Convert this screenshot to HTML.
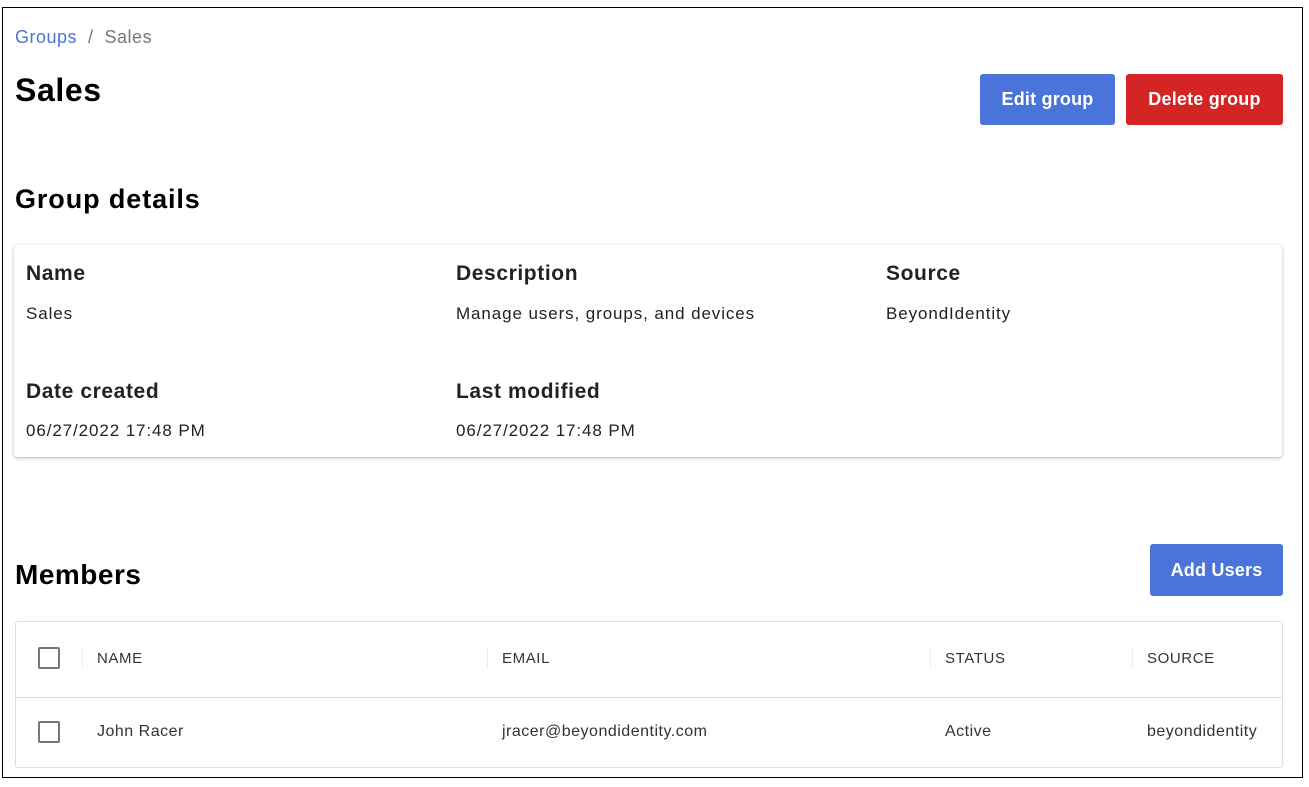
<!DOCTYPE html>
<html><head><style>
*{margin:0;padding:0;box-sizing:border-box}
body{width:1309px;height:787px;background:#fff;font-family:"Liberation Sans",sans-serif;position:relative;overflow:hidden;color:#151515}
.frame{position:absolute;left:2px;top:7px;width:1301px;height:771px;border:1px solid #000}
.a{position:absolute;white-space:nowrap}
.btn{position:absolute;color:#fff;font-size:18px;font-weight:bold;display:flex;align-items:center;justify-content:center;border-radius:3px;letter-spacing:.2px}
.card{position:absolute;left:14px;top:245px;width:1268px;height:212px;background:#fff;box-shadow:0 1px 3px rgba(0,0,0,.3);border-radius:3px}
.lbl{font-size:21px;font-weight:bold;color:#222;letter-spacing:.6px}
.val{font-size:17px;color:#222;letter-spacing:.9px}
.tbl{position:absolute;left:15px;top:621px;width:1268px;height:147px;border:1px solid #ddd;border-radius:3px}
.cb{position:absolute;width:22px;height:22px;border:2px solid #777;border-radius:2px}
.th{font-size:15px;color:#333;letter-spacing:.6px}
.td{font-size:16px;color:#333;letter-spacing:.5px}
.sep{position:absolute;width:1px;height:20px;background:#eee;top:648px}
</style></head><body>
<div class="frame"></div>
<div class="a" style="left:15px;top:27px;font-size:18px;letter-spacing:.5px"><span style="color:#4a74d9">Groups</span><span style="color:#777">&nbsp; / &nbsp;Sales</span></div>
<div class="a" style="left:15px;top:72px;font-size:32px;font-weight:bold;color:#000;letter-spacing:.6px">Sales</div>
<div class="btn" style="left:980px;top:74px;width:135px;height:51px;background:#4a74d9">Edit group</div>
<div class="btn" style="left:1126px;top:74px;width:157px;height:51px;background:#d42424">Delete group</div>
<div class="a" style="left:15px;top:184px;font-size:27px;font-weight:bold;color:#000;letter-spacing:.9px">Group details</div>
<div class="card"></div>
<div class="a lbl" style="left:26px;top:262px">Name</div>
<div class="a lbl" style="left:456px;top:262px">Description</div>
<div class="a lbl" style="left:886px;top:262px">Source</div>
<div class="a val" style="left:26px;top:304px">Sales</div>
<div class="a val" style="left:456px;top:304px">Manage users, groups, and devices</div>
<div class="a val" style="left:886px;top:304px">BeyondIdentity</div>
<div class="a lbl" style="left:26px;top:380px">Date created</div>
<div class="a lbl" style="left:456px;top:380px">Last modified</div>
<div class="a val" style="left:26px;top:421px">06/27/2022 17:48 PM</div>
<div class="a val" style="left:456px;top:421px">06/27/2022 17:48 PM</div>
<div class="a" style="left:15px;top:559px;font-size:28px;font-weight:bold;color:#000;letter-spacing:.5px">Members</div>
<div class="btn" style="left:1150px;top:544px;width:133px;height:52px;background:#4a74d9">Add Users</div>
<div class="tbl"></div>
<div style="position:absolute;left:16px;top:697px;width:1266px;height:1px;background:#ddd"></div>
<div class="cb" style="left:38px;top:647px"></div>
<div class="cb" style="left:38px;top:721px"></div>
<div class="sep" style="left:82px"></div>
<div class="sep" style="left:487px"></div>
<div class="sep" style="left:930px"></div>
<div class="sep" style="left:1132px"></div>
<div class="a th" style="left:97px;top:650px">NAME</div>
<div class="a th" style="left:502px;top:650px">EMAIL</div>
<div class="a th" style="left:945px;top:650px">STATUS</div>
<div class="a th" style="left:1147px;top:650px">SOURCE</div>
<div class="a td" style="left:97px;top:723px">John Racer</div>
<div class="a td" style="left:502px;top:723px">jracer@beyondidentity.com</div>
<div class="a td" style="left:945px;top:723px">Active</div>
<div class="a td" style="left:1147px;top:723px">beyondidentity</div>
</body></html>
